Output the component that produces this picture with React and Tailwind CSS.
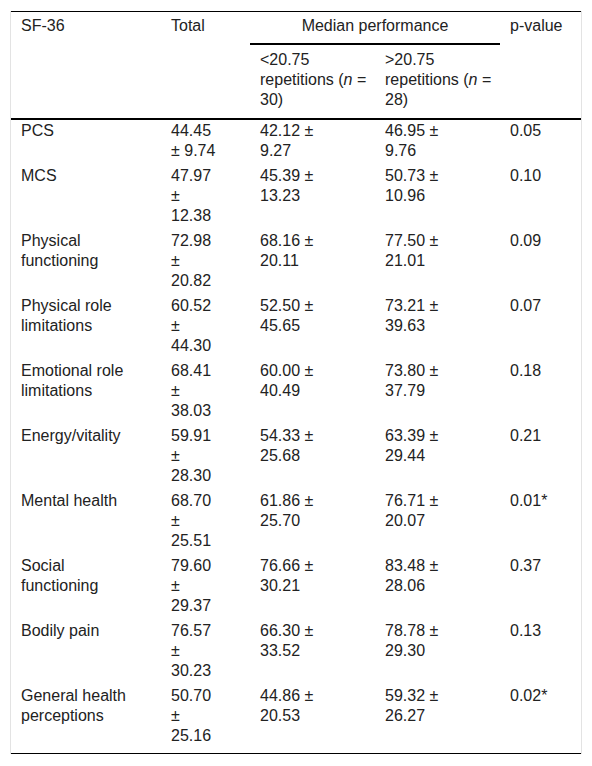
import React from "react";

const rows = [
  { name: ["PCS"], total: ["44.45", "± 9.74"], low: ["42.12 ±", "9.27"], high: ["46.95 ±", "9.76"], p: "0.05" },
  { name: ["MCS"], total: ["47.97", "±", "12.38"], low: ["45.39 ±", "13.23"], high: ["50.73 ±", "10.96"], p: "0.10" },
  { name: ["Physical", "functioning"], total: ["72.98", "±", "20.82"], low: ["68.16 ±", "20.11"], high: ["77.50 ±", "21.01"], p: "0.09" },
  { name: ["Physical role", "limitations"], total: ["60.52", "±", "44.30"], low: ["52.50 ±", "45.65"], high: ["73.21 ±", "39.63"], p: "0.07" },
  { name: ["Emotional role", "limitations"], total: ["68.41", "±", "38.03"], low: ["60.00 ±", "40.49"], high: ["73.80 ±", "37.79"], p: "0.18" },
  { name: ["Energy/vitality"], total: ["59.91", "±", "28.30"], low: ["54.33 ±", "25.68"], high: ["63.39 ±", "29.44"], p: "0.21" },
  { name: ["Mental health"], total: ["68.70", "±", "25.51"], low: ["61.86 ±", "25.70"], high: ["76.71 ±", "20.07"], p: "0.01*" },
  { name: ["Social", "functioning"], total: ["79.60", "±", "29.37"], low: ["76.66 ±", "30.21"], high: ["83.48 ±", "28.06"], p: "0.37" },
  { name: ["Bodily pain"], total: ["76.57", "±", "30.23"], low: ["66.30 ±", "33.52"], high: ["78.78 ±", "29.30"], p: "0.13" },
  { name: ["General health", "perceptions"], total: ["50.70", "±", "25.16"], low: ["44.86 ±", "20.53"], high: ["59.32 ±", "26.27"], p: "0.02*" },
];

function Lines({ lines }) {
  return lines.map((line, i) => (
    <div key={i} className="whitespace-nowrap">
      {line}
    </div>
  ));
}

export default function App() {
  return (
    <div className="min-h-[766px] bg-white pt-[11px] font-['Liberation_Sans',Arial,sans-serif] text-[16px] leading-[20px] text-[#222]">
      <div className="mx-[10px] w-[572px] border-x border-[#e3e3e3]">
        <div className="border-y border-black">
          {/* header */}
          <div className="grid grid-cols-[150px_89px_125px_125px_81px] border-b-2 border-black">
            <div className="row-span-2 pl-[10px] pt-[4px]">SF-36</div>
            <div className="row-span-2 pl-[10px] pt-[4px]">Total</div>
            <div className="col-span-2 border-b-2 border-black pt-[4px] pb-[7px] text-center">
              Median performance
            </div>
            <div className="row-span-2 pl-[10px] pt-[4px]">p-value</div>
            <div className="pl-[10px] pt-[5px] pb-[8px]">
              <div>&lt;20.75</div>
              <div className="whitespace-nowrap">
                repetitions (<i>n</i> =
              </div>
              <div>30)</div>
            </div>
            <div className="pl-[10px] pt-[5px] pb-[8px]">
              <div>&gt;20.75</div>
              <div className="whitespace-nowrap">
                repetitions (<i>n</i> =
              </div>
              <div>28)</div>
            </div>
          </div>

          {/* body */}
          {rows.map((row, i) => (
            <div
              key={row.p + i}
              className={`grid grid-cols-[150px_89px_125px_125px_81px] pt-[1px] ${
                i === rows.length - 1 ? "pb-[7px]" : "pb-[4px]"
              }`}
            >
              <div className="pl-[10px]">
                <Lines lines={row.name} />
              </div>
              <div className="pl-[10px]">
                <Lines lines={row.total} />
              </div>
              <div className="pl-[10px]">
                <Lines lines={row.low} />
              </div>
              <div className="pl-[10px]">
                <Lines lines={row.high} />
              </div>
              <div className="pl-[10px]">{row.p}</div>
            </div>
          ))}
        </div>
      </div>
    </div>
  );
}
